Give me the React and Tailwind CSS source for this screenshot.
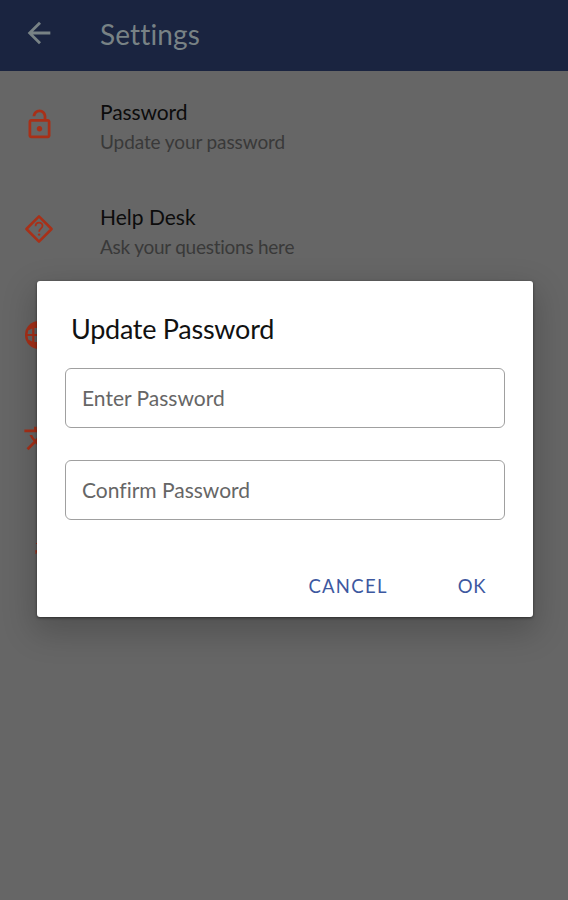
import React from "react";
import { MdOutlineLockOpen, MdTranslate } from "react-icons/md";

const BackIcon = () => (
  <svg className="mb-0.5 w-[34px] h-[34px]" viewBox="0 0 24 24" fill="currentColor">
    <path d="M20 11H7.83l5.59-5.59L12 4l-8 8 8 8 1.41-1.41L7.83 13H20v-2z" />
  </svg>
);

const HelpIcon = () => (
  <svg
    className="w-[30px] h-[30px]"
    viewBox="0 0 30 30"
    fill="none"
    stroke="currentColor"
    strokeWidth="2.5"
    strokeLinejoin="round"
  >
    <path d="M15 2.4 27.6 15 15 27.6 2.4 15Z" />
    <path strokeWidth="1.8" d="M11.6 12.2c0-4.8 6.9-4.5 6.9-.5 0 3-3.4 3-3.4 6" />
    <circle cx="15.1" cy="20.6" r="1.2" fill="currentColor" stroke="none" />
  </svg>
);

const BallIcon = () => (
  <svg className="mt-0.5 w-[28px] h-[28px]" viewBox="0 0 28 28">
    <circle cx="14" cy="14" r="14" fill="currentColor" />
    <g fill="#666666">
      <path d="M3.2 9.5 7.2 7.4v5.6H2.6Z" />
      <path d="M2.6 15h4.6v5.6l-4-2.1Z" />
      <path d="M9.4 7h9.2v6H9.4Z" />
      <path d="M9.4 15h9.2v6H9.4Z" />
      <path d="M24.8 9.5 20.8 7.4v5.6h4.6Z" />
      <path d="M25.4 15h-4.6v5.6l4-2.1Z" />
    </g>
  </svg>
);

const MoreIcon = () => (
  <svg className="w-[9px] h-[14px] mt-2" viewBox="0 0 9 14" fill="none" stroke="currentColor">
    <path d="M1 3c2-3 6-1 4 2L1 11h6M1 9v4" />
  </svg>
);

const settings = [
  {
    title: "Password",
    text: "Update your password",
    icon: <MdOutlineLockOpen className="mt-0.5 w-[33px] h-[33px]" />,
    titleStyle: "tracking-[-0.1px]",
    textStyle: "tracking-[-0.1px]",
  },
  {
    title: "Help Desk",
    text: "Ask your questions here",
    icon: <HelpIcon />,
    titleStyle: "tracking-[0px]",
    textStyle: "tracking-[-0.25px]",
  },
  { icon: <BallIcon /> },
  { icon: <MdTranslate className="mt-[3px] w-[33px] h-[33px]" /> },
  { icon: <MoreIcon /> },
];

const fields = ["Enter Password", "Confirm Password"];

const App = () => {
  return (
    <div className="relative h-[900px] w-full overflow-hidden bg-[#666666] font-['Lato',sans-serif] [font-variant-ligatures:none]">
      {/* Header */}
      <header className="flex h-[71px] items-center bg-[#1a2440] pl-[22px] pb-[3px] text-[#788285]">
        <BackIcon />
        <h1 className="ml-11 text-[28px] leading-none tracking-[0.15px]">Settings</h1>
      </header>

      {/* Settings List */}
      <ul>
        {settings.map((item, index) => (
          <li key={index} className="flex h-[105px] items-center">
            <div className="flex w-[78px] shrink-0 justify-center text-[#a83018]">
              {item.icon}
            </div>
            {item.title && (
              <div className="mt-[6px] ml-[22px] whitespace-nowrap">
                <h2 className={`text-[21px] leading-[30px] text-[#0c0c0c] ${item.titleStyle}`}>
                  {item.title}
                </h2>
                <p className={`text-[19px] leading-[30px] text-[#393939] ${item.textStyle}`}>
                  {item.text}
                </p>
              </div>
            )}
          </li>
        ))}
      </ul>

      {/* Update Password Dialog */}
      <div className="absolute left-[37px] top-[281px] flex h-[336px] w-[496px] flex-col rounded-[3px] bg-white px-7 shadow-[0_12px_32px_4px_rgba(0,0,0,0.2),0_1px_3px_rgba(0,0,0,0.5)]">
        <h2 className="mt-[31px] ml-[6px] whitespace-nowrap text-[27px] leading-[34px] tracking-[-0.27px] text-[#111111]">
          Update Password
        </h2>
        <div className="mt-[22px] flex flex-col gap-8">
          {fields.map((label) => (
            <div
              key={label}
              className="flex h-[60px] items-center rounded-[6px] border-[1.5px] border-[#a0a0a0] pb-px pl-4 text-[21px] text-[#666666]"
            >
              {label}
            </div>
          ))}
        </div>
        <div className="mt-[51px] flex justify-end pr-[19px] text-[18.5px] leading-[30px] text-[#3d589f]">
          <button className="mr-[70px] tracking-[1.3px]">CANCEL</button>
          <button className="tracking-[0.6px]">OK</button>
        </div>
      </div>
    </div>
  );
};

export default App;
